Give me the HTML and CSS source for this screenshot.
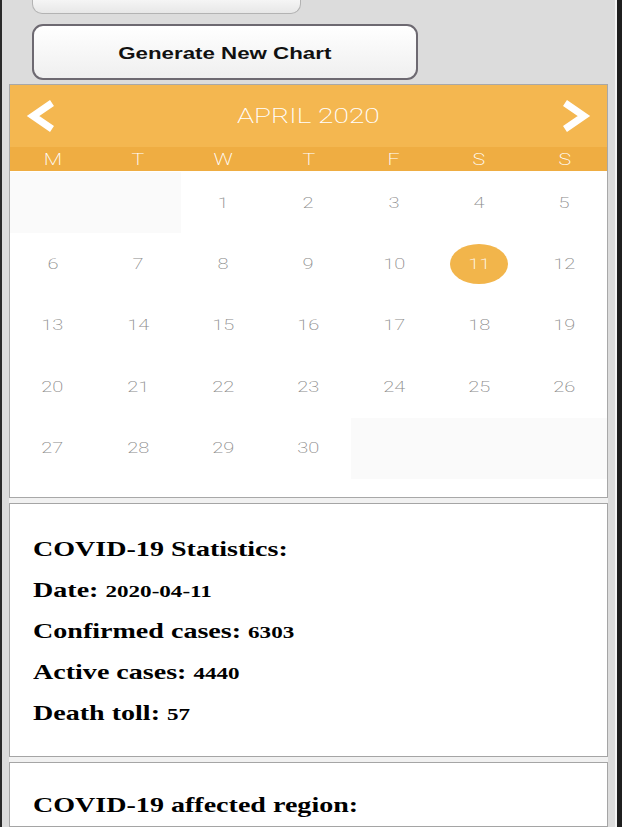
FILE: index.html
```html
<!DOCTYPE html>
<html lang="en">
<head>
<meta charset="utf-8">
<title>COVID-19 Statistics</title>
<link rel="stylesheet" href="styles.css">
</head>
<body>
<div class="frame">
  <div class="page">
    <div class="btn-prev"></div>
    <button class="btn-generate" type="button"><span class="stretch">Generate New Chart</span></button>
    <div class="stack">
      <section class="calendar">
        <header class="cal-head">
          <svg class="chev" viewBox="0 0 32 32" width="32" height="32"><polyline points="27,3 8,16 27,29"/></svg>
          <span class="cal-title stretch">APRIL 2020</span>
          <svg class="chev" viewBox="0 0 32 32" width="32" height="32"><polyline points="5,3 24,16 5,29"/></svg>
        </header>
        <div class="cal-days">
          <span><span class="stretch">M</span></span>
          <span><span class="stretch">T</span></span>
          <span><span class="stretch">W</span></span>
          <span><span class="stretch">T</span></span>
          <span><span class="stretch">F</span></span>
          <span><span class="stretch">S</span></span>
          <span><span class="stretch">S</span></span>
        </div>
        <div class="cal-grid">
          <div class="cell empty"></div>
          <div class="cell empty"></div>
          <div class="cell"><span class="num">1</span></div>
          <div class="cell"><span class="num">2</span></div>
          <div class="cell"><span class="num">3</span></div>
          <div class="cell"><span class="num">4</span></div>
          <div class="cell"><span class="num">5</span></div>
          <div class="cell"><span class="num">6</span></div>
          <div class="cell"><span class="num">7</span></div>
          <div class="cell"><span class="num">8</span></div>
          <div class="cell"><span class="num">9</span></div>
          <div class="cell"><span class="num">10</span></div>
          <div class="cell"><span class="pick"><span class="num">11</span></span></div>
          <div class="cell"><span class="num">12</span></div>
          <div class="cell"><span class="num">13</span></div>
          <div class="cell"><span class="num">14</span></div>
          <div class="cell"><span class="num">15</span></div>
          <div class="cell"><span class="num">16</span></div>
          <div class="cell"><span class="num">17</span></div>
          <div class="cell"><span class="num">18</span></div>
          <div class="cell"><span class="num">19</span></div>
          <div class="cell"><span class="num">20</span></div>
          <div class="cell"><span class="num">21</span></div>
          <div class="cell"><span class="num">22</span></div>
          <div class="cell"><span class="num">23</span></div>
          <div class="cell"><span class="num">24</span></div>
          <div class="cell"><span class="num">25</span></div>
          <div class="cell"><span class="num">26</span></div>
          <div class="cell"><span class="num">27</span></div>
          <div class="cell"><span class="num">28</span></div>
          <div class="cell"><span class="num">29</span></div>
          <div class="cell"><span class="num">30</span></div>
          <div class="cell empty"></div>
          <div class="cell empty"></div>
          <div class="cell empty"></div>
        </div>
      </section>
      <section class="card stats">
        <p class="stat">COVID-19 Statistics:</p>
        <p class="stat">Date: <span class="val">2020-04-11</span></p>
        <p class="stat">Confirmed cases: <span class="val">6303</span></p>
        <p class="stat">Active cases: <span class="val">4440</span></p>
        <p class="stat">Death toll: <span class="val">57</span></p>
      </section>
      <section class="card region">
        <p class="stat">COVID-19 affected region:</p>
      </section>
    </div>
  </div>
</div>
</body>
</html>
```

FILE: styles.css
```css
html, body {
  margin: 0;
  padding: 0;
  overflow: hidden;
}

.frame {
  width: 622px;
  height: 827px;
  box-sizing: border-box;
  border-left: 2px solid #2a2a2a;
  border-right: 5px solid #1f1f1f;
  overflow: hidden;
}

.page {
  height: 100%;
  background: #dcdcdc;
  border-right: 2px solid #f4f4f4;
  display: flex;
  flex-direction: column;
}

.stretch {
  display: inline-block;
  transform: scaleX(1.336);
}

.btn-prev {
  box-sizing: border-box;
  width: 269px;
  height: 14px;
  margin-left: 30px;
  border: 1px solid #b3b3b3;
  border-top: none;
  border-radius: 0 0 10px 10px;
  background: linear-gradient(#f5f5f5, #e7e7e7);
}

.btn-generate {
  appearance: none;
  box-sizing: border-box;
  width: 386px;
  height: 56px;
  margin: 10px 0 0 30px;
  padding: 3px 0 0;
  border: 2px solid #6d6971;
  border-radius: 11px;
  background: linear-gradient(#ffffff, #efefef);
  font: bold 16.7px "Liberation Sans", Arial, sans-serif;
  color: #111;
  display: flex;
  align-items: center;
  justify-content: center;
}

.stack {
  margin: 4px 7px 0;
  background: #f1f1f1;
  display: flex;
  flex-direction: column;
  gap: 5px;
  flex: 1;
}

.calendar {
  border: 1px solid #a8a8a8;
  background: #fff;
  padding-bottom: 18px;
  font-family: Roboto, "Liberation Sans", sans-serif;
  font-weight: 300;
}

.cal-head {
  height: 62px;
  background: #f4b750;
  display: flex;
  align-items: center;
  justify-content: space-between;
  padding: 0 15px;
}

.chev {
  display: block;
  flex: none;
}

.chev polyline {
  fill: none;
  stroke: #fff;
  stroke-width: 7;
  stroke-linejoin: miter;
  stroke-linecap: butt;
}

.cal-title {
  color: #fff;
  font-size: 21px;
  font-weight: 200;
}

.cal-days {
  height: 24px;
  background: #efad42;
  display: grid;
  grid-template-columns: repeat(7, 1fr);
  align-items: center;
  color: #fff;
  font-size: 16px;
  font-weight: 200;
  text-align: center;
}

.cal-grid {
  display: grid;
  grid-template-columns: repeat(7, 1fr);
  grid-auto-rows: 61.4px;
  padding-top: 1px;
}

.cell {
  display: flex;
  align-items: center;
  justify-content: center;
  color: #8a8a8a;
  font-size: 15px;
  font-weight: 200;
}

.cell.empty {
  background: #fafafa;
}

.num {
  display: inline-block;
  transform: scaleX(1.336);
}

.pick {
  width: 58px;
  height: 40px;
  border-radius: 50%;
  background: #f2b54b;
  color: #fff;
  display: flex;
  align-items: center;
  justify-content: center;
}

.card {
  border: 1px solid #a5a5a5;
  background: #fff;
  padding: 0 23px;
  overflow: hidden;
}

.stats {
  padding-top: 25px;
  padding-bottom: 22px;
}

.region {
  padding-top: 22px;
  flex: 1;
}

.stat {
  margin: 0;
  width: max-content;
  height: 41px;
  line-height: 41px;
  font: bold 21px/41px "Liberation Serif", "Times New Roman", serif;
  color: #000;
  transform: scaleX(1.336);
  transform-origin: 0 50%;
}

.stat .val {
  font-size: 17.3px;
}
```
